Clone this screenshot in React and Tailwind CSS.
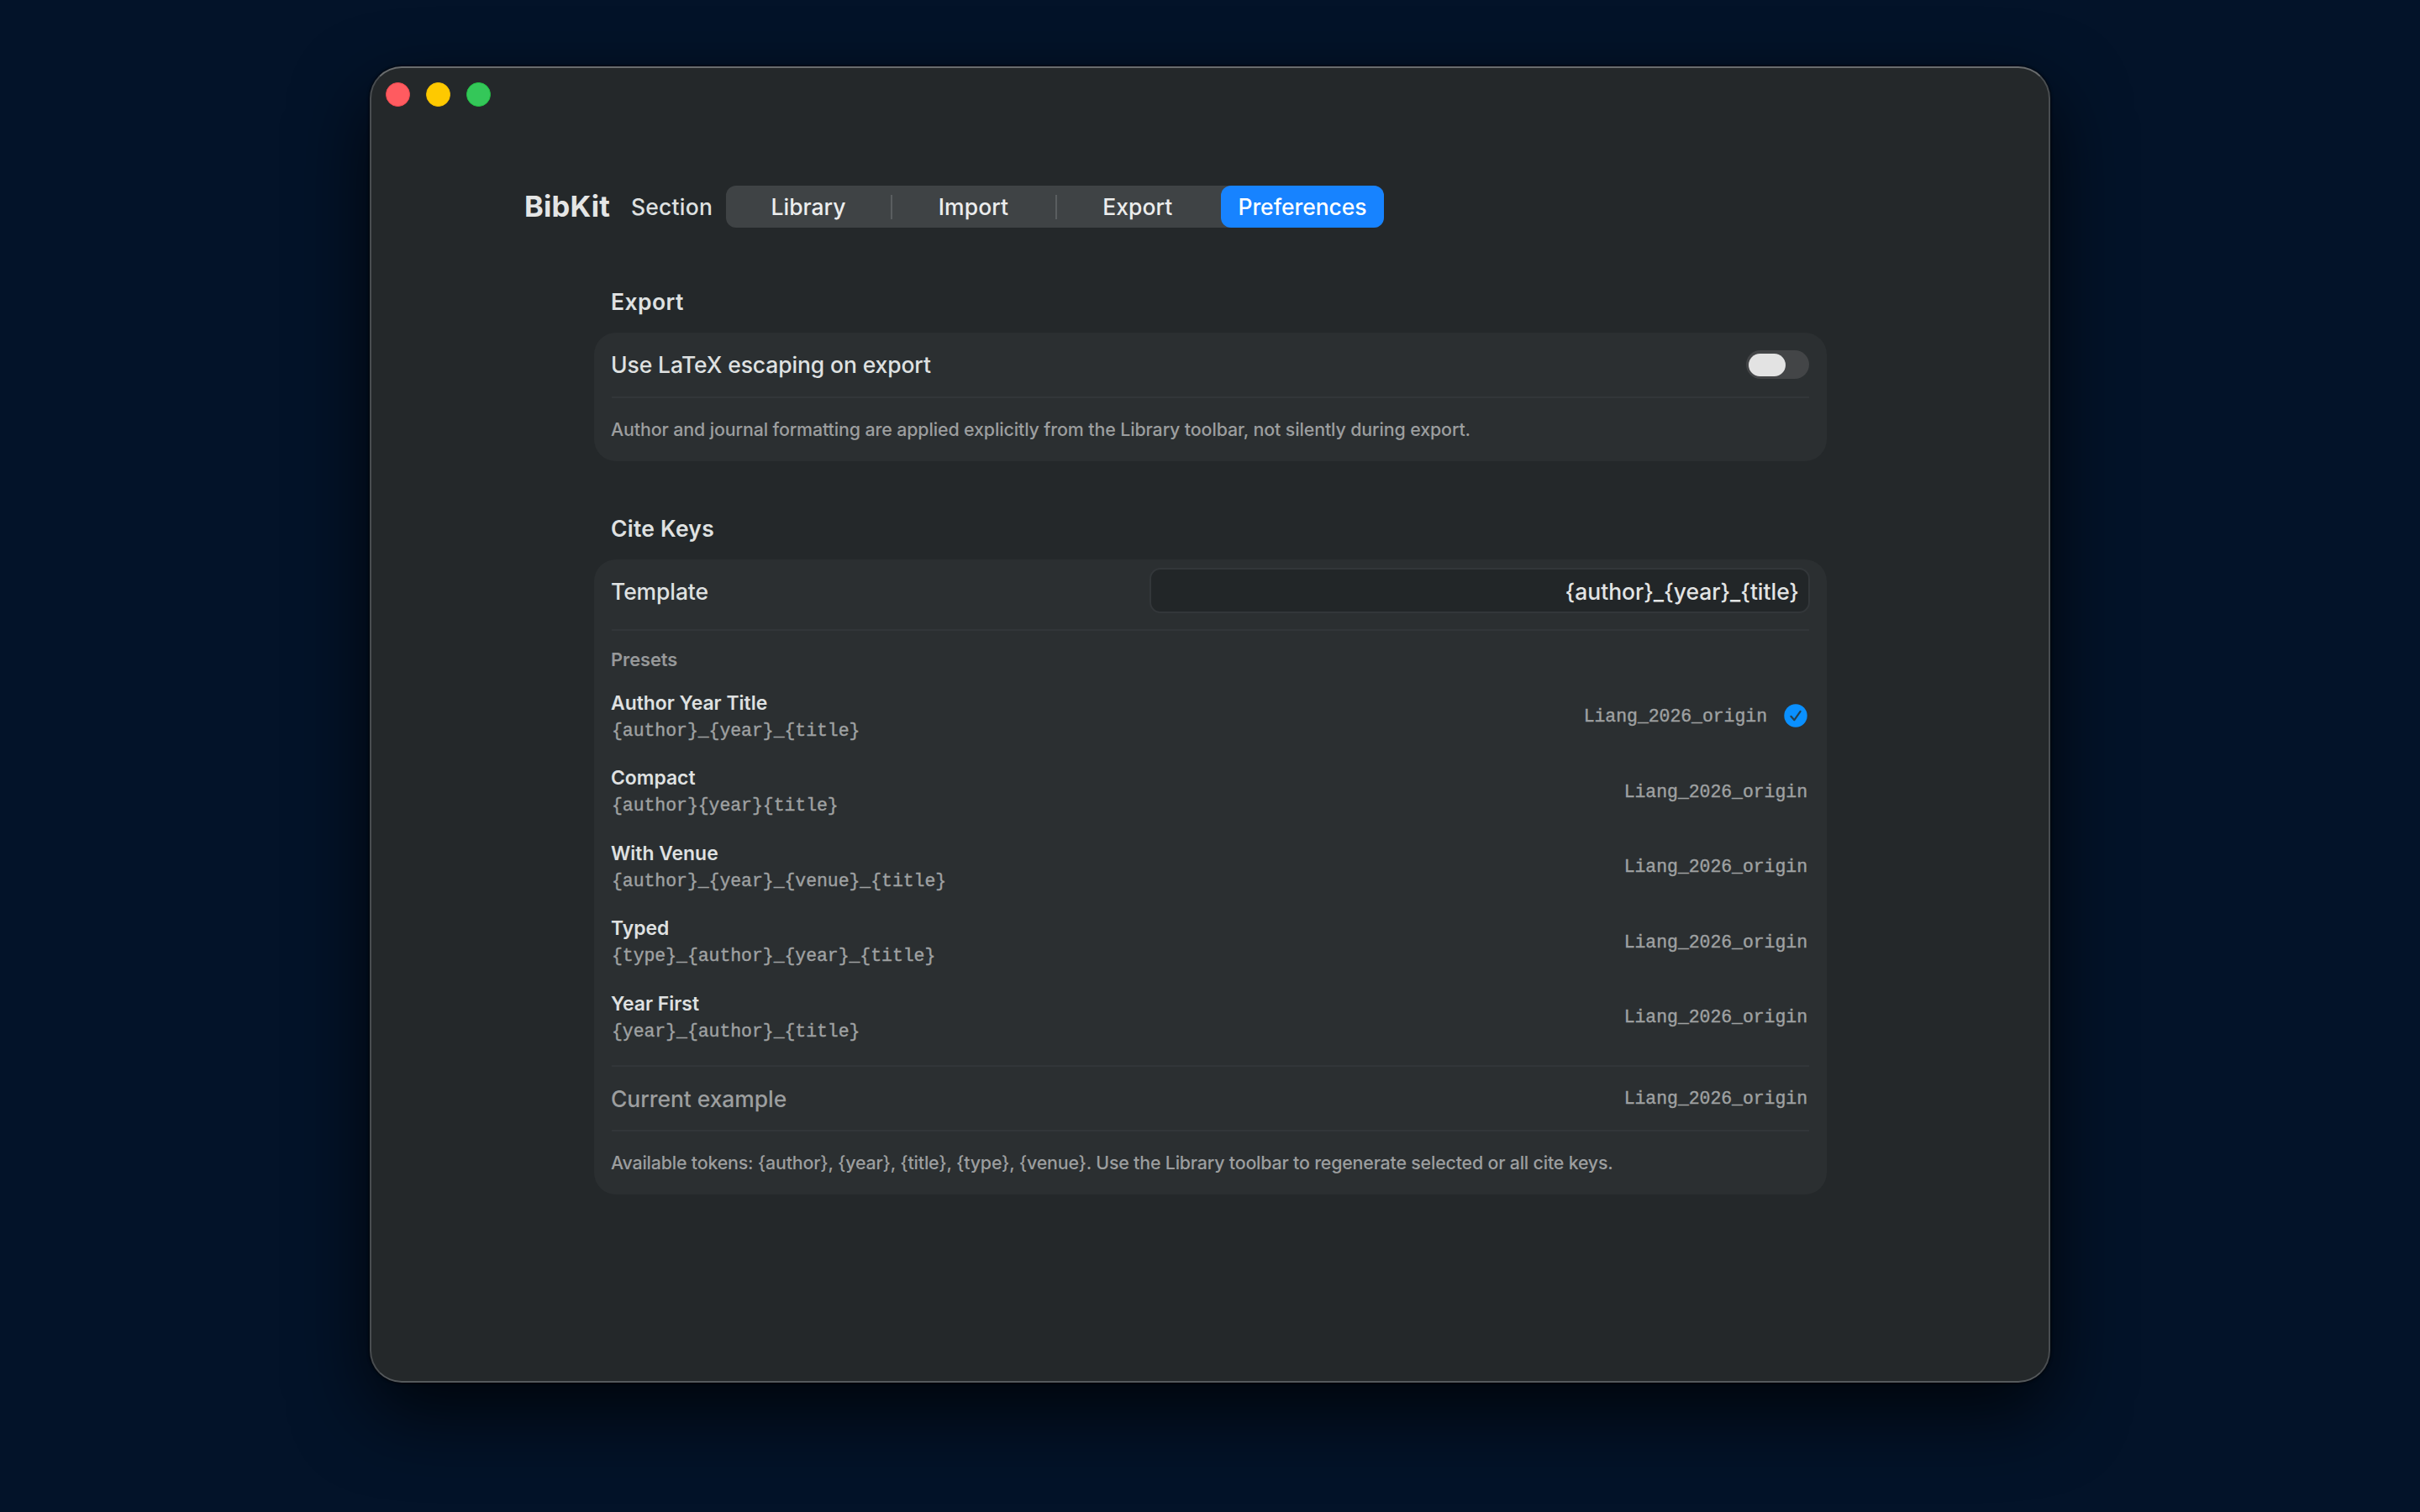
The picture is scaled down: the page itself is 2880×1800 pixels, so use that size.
const presets = [
  { name: "Author Year Title", template: "{author}_{year}_{title}", selected: true },
  { name: "Compact", template: "{author}{year}{title}" },
  { name: "With Venue", template: "{author}_{year}_{venue}_{title}" },
  { name: "Typed", template: "{type}_{author}_{year}_{title}" },
  { name: "Year First", template: "{year}_{author}_{title}" },
];

function Mono({ children }) {
  return (
    <span className="block whitespace-nowrap font-['Liberation_Mono',monospace] text-[21.5px] leading-7 tracking-[-0.06px] text-[#9fa1a2] [-webkit-text-stroke:0.4px_#9fa1a2]">
      {children}
    </span>
  );
}

function Divider() {
  return <div className="ml-px h-[2px] w-[1425px] shrink-0 bg-[#323639]" />;
}

function CheckBadge() {
  return (
    <svg className="-mt-[2px] size-[28px]" viewBox="0 0 28 28" fill="none">
      <circle cx="14" cy="14" r="13.7" fill="#0a90ff" />
      <path
        d="M8.4 14.8 L12.4 19.2 L19.6 8.9"
        stroke="#23404f"
        strokeWidth="2.2"
        strokeLinecap="round"
        strokeLinejoin="round"
      />
    </svg>
  );
}

function SectionPicker() {
  return (
    <div className="-ml-[0.5px] flex h-[50px] w-[783.5px] items-center rounded-[12px] bg-[#3f4345] text-[26.5px] font-[450] leading-8 text-[#eceded]">
      <div className="w-[196px] pl-px text-center tracking-[-0.05px]">Library</div>
      <div className="h-[29px] w-[2px] bg-[#5a5e60]" />
      <div className="w-[194px] text-center tracking-[0.1px]">Import</div>
      <div className="h-[29px] w-[2px] bg-[#5a5e60]" />
      <div className="w-[195.5px] pr-[3px] text-center tracking-[0.05px]">Export</div>
      <div className="flex h-[50px] w-[194px] items-center justify-center rounded-[12px] bg-[#1783ff] tracking-[-0.05px] text-white">
        Preferences
      </div>
    </div>
  );
}

export default function App() {
  return (
    <div className="h-[1800px] w-[2880px] overflow-hidden bg-[#031329] pl-[440px] pt-[79px] font-['Inter',sans-serif] text-[26.5px] font-[450] leading-8 text-[#dfe1e1]">
      <div className="h-[1567px] w-[2000px] rounded-[38px] border-2 border-[#494d50] border-t-[#696c6e] border-b-[#55595c] bg-[#24282a] shadow-[0_0_3px_1px_rgba(0,0,0,0.6),0_36px_90px_rgba(0,0,0,0.75)]">
        <div className="flex gap-[19px] pl-[16.5px] pt-[17px]">
          <div className="size-[29px] rounded-full border border-[#f04a50] bg-[#ff5b60]" />
          <div className="size-[29px] rounded-full border border-[#f5c000] bg-[#fec900]" />
          <div className="size-[29px] rounded-full border border-[#22c244] bg-[#34c759]" />
        </div>

        <div className="mt-[94px] flex items-center pl-[182px]">
          <h1 className="w-[127px] text-[34.5px] font-bold leading-10 tracking-[0.2px] text-[#e4e5e5]">BibKit</h1>
          <span className="w-[113px] tracking-[0.2px]">Section</span>
          <SectionPicker />
        </div>

        <div className="mt-[72px] flex w-[1732px] flex-col pl-[265px]">
          <h2 className="pl-[20px] font-semibold tracking-[0.45px]">Export</h2>
          <section className="mt-[21px] flex h-[153px] w-[1467px] flex-col rounded-[26px] bg-[#2b2f31] pl-[20px]">
            <div className="flex h-[76px] w-[1426px] items-center justify-between">
              <span className="tracking-[-0.12px]">Use LaTeX escaping on export</span>
              <div className="flex h-[34px] w-[75px] items-center rounded-full bg-[#434547] pl-[3px]">
                <div className="h-[27px] w-[44px] rounded-full bg-[#e3e3e3]" />
              </div>
            </div>
            <Divider />
            <p className="flex h-[73px] items-center whitespace-nowrap text-[21.4px] leading-7 tracking-[-0.125px] text-[#9c9e9f]">
              Author and journal formatting are applied explicitly from the Library toolbar, not silently during export.
            </p>
          </section>

          <h2 className="mt-[64px] pl-[20px] font-semibold tracking-[0.24px]">Cite Keys</h2>
          <section className="mt-[21px] flex h-[756px] w-[1467px] flex-col rounded-[26px] bg-[#2b2f31] pl-[20px]">
            <div className="flex h-[83px] w-[1427px] justify-between pb-[19px] pt-[10px]">
              <span className="pt-[11.5px] tracking-[-0.1px]">Template</span>
              <div className="flex h-[54px] w-[786px] items-center justify-end rounded-[13px] border-2 border-[#33373a] bg-[#222628] pr-[11px] pt-px tracking-[-0.04px] text-[#e2e4e4]">
                {"{author}_{year}_{title}"}
              </div>
            </div>
            <Divider />
            <h3 className="pt-[20px] text-[21.8px] font-semibold leading-7 tracking-[-0.03px] text-[#97999a]">Presets</h3>
            <ul className="w-[1424px] pb-[12px] pt-[9.5px]">
              {presets.map((preset) => (
                <li key={preset.name} className="flex h-[89.5px] items-center justify-between">
                  <div className="flex flex-col gap-[5px]">
                    <span className="text-[22.9px] font-semibold leading-7">{preset.name}</span>
                    <div className="pl-px">
                      <Mono>{preset.template}</Mono>
                    </div>
                  </div>
                  <div className="flex items-center gap-[20px]">
                    <Mono>Liang_2026_origin</Mono>
                    {preset.selected && <CheckBadge />}
                  </div>
                </li>
              ))}
            </ul>
            <Divider />
            <div className="flex h-[75px] w-[1424px] items-center justify-between">
              <span className="tracking-[-0.07px] text-[#9c9e9f]">Current example</span>
              <Mono>Liang_2026_origin</Mono>
            </div>
            <Divider />
            <p className="flex h-[73px] items-center whitespace-nowrap text-[21.4px] leading-7 tracking-[-0.2px] text-[#9c9e9f]">
              {"Available tokens: {author}, {year}, {title}, {type}, {venue}. Use the Library toolbar to regenerate selected or all cite keys."}
            </p>
          </section>
        </div>
      </div>
    </div>
  );
}
